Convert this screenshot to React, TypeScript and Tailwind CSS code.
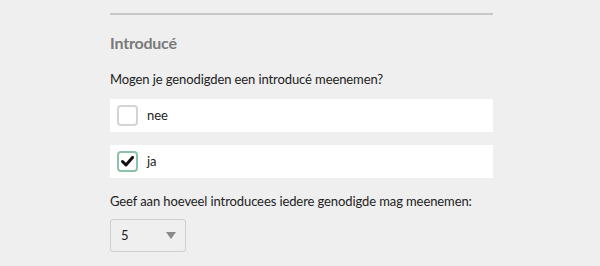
import React from 'react';

const Checkbox: React.FC<{ checked?: boolean }> = ({ checked }) => (
  <span
    className={
      'flex h-[21px] w-[21px] items-center justify-center rounded-[4px] border-2 bg-white ' +
      (checked ? 'border-[#8cc2aa]' : 'border-[#d4d4d4]')
    }
  >
    {checked && (
      <svg width="13" height="11" viewBox="0 0 13 11">
        <path d="M1.5 5.5 L5 9 L11.5 1.5" fill="none" stroke="#111111" strokeWidth="3" strokeLinecap="round" strokeLinejoin="round" />
      </svg>
    )}
  </span>
);

export default function App() {
  return (
    <div className="min-h-[266px] w-[600px] bg-[#efefef] pt-[13px] text-[#222222] [font-family:'Lato','Noto_Sans',sans-serif]">
      <div className="ml-[110px] w-[383px]">
        <div className="h-[2px] bg-[#c8c8c8]" />

        {/* Heading */}
        <h2 className="mt-[16px] text-[16px] font-bold leading-[24px] tracking-[-0.2px] text-[#7a7a7a]">Introducé</h2>

        <p className="mt-[14px] whitespace-nowrap text-[13px] leading-[20px] tracking-[-0.1px]">
          Mogen je genodigden een introducé meenemen?
        </p>

        {/* Options */}
        <label className="mt-[10px] flex h-[33px] items-center gap-[9px] bg-white pl-[7px] text-[13px]">
          <Checkbox />
          <span>nee</span>
        </label>
        <label className="mt-[13px] flex h-[33px] items-center gap-[9px] bg-white pl-[7px] text-[13px]">
          <Checkbox checked />
          <span>ja</span>
        </label>

        <p className="mt-[13px] whitespace-nowrap text-[13px] leading-[20px] tracking-[-0.1px]">
          Geef aan hoeveel introducees iedere genodigde mag meenemen:
        </p>

        {/* Select */}
        <div className="mt-[8px] flex h-[33px] w-[76px] items-center justify-between rounded-[3px] border border-[#cfcfcf] bg-[#efefef] pl-[10px] pr-[9px] text-[13px]">
          <span>5</span>
          <svg width="10" height="7" viewBox="0 0 10 7">
            <path d="M0 0 H10 L5 7 Z" fill="#8a8a8a" />
          </svg>
        </div>
      </div>
    </div>
  );
}
